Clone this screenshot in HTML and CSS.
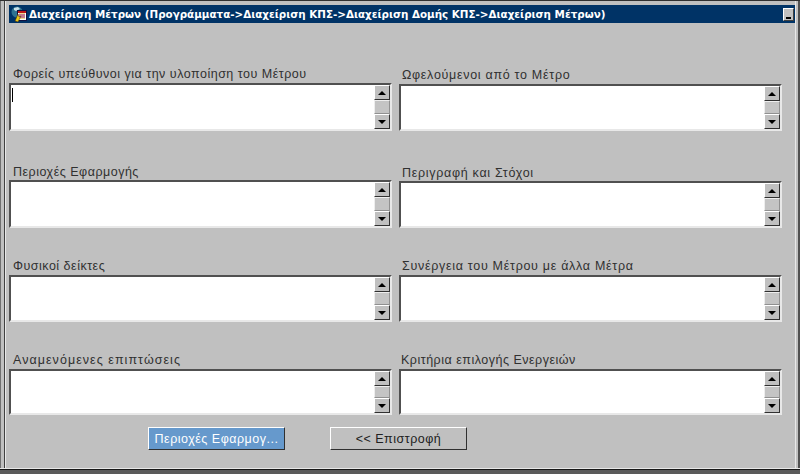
FILE: index.html
```html
<!DOCTYPE html>
<html lang="el">
<head>
  <meta charset="UTF-8">
  <title>Διαχείριση Μέτρων</title>
  <link rel="stylesheet" href="styles.css">
</head>
<body>
  <div class="window">
    <div class="titlebar">
      <svg class="app-icon" width="16" height="16" viewBox="0 0 16 16">
        <circle cx="6" cy="6" r="5.5" fill="#2f7391"/>
        <path d="M3 2 L7 1 L9 3 L5 5 L3 4 Z" fill="#c8dfe8"/>
        <rect x="6.5" y="4.5" width="9" height="10" fill="#fff" stroke="#101040"/>
        <rect x="7" y="5" width="8" height="2" fill="#c01818"/>
        <path d="M8 8 H14 M8 10 H14 M8 12 H14" stroke="#d8b820"/>
        <path d="M8 9 H14 M8 11 H14" stroke="#a01890"/>
        <path d="M4 15 L7 8 L8 11 L10 10 L7 16 Z" fill="#e8c818" stroke="#402000" stroke-width="0.5"/>
      </svg>
      <span class="title">Διαχείριση Μέτρων (Προγράμματα-&gt;Διαχείριση ΚΠΣ-&gt;Διαχείριση Δομής ΚΠΣ-&gt;Διαχείριση Μέτρων)</span>
      <div class="min-btn"><span class="min-mark"></span></div>
    </div>

    <div class="content">
      <div class="fields">
        <div class="field row-1">
          <label>Φορείς υπεύθυνοι για την υλοποίηση του Μέτρου</label>
          <div class="memo">
            <div class="memo-text"><span class="caret"></span></div>
            <div class="scrollbar">
              <div class="arrow-btn"><span class="arrow-up"></span></div>
              <div class="thumb"></div>
              <div class="arrow-btn"><span class="arrow-down"></span></div>
            </div>
          </div>
        </div>
        <div class="field row-1 col-right">
          <label class="label-loose">Ωφελούμενοι από το Μέτρο</label>
          <div class="memo">
            <div class="memo-text"></div>
            <div class="scrollbar">
              <div class="arrow-btn"><span class="arrow-up"></span></div>
              <div class="thumb"></div>
              <div class="arrow-btn"><span class="arrow-down"></span></div>
            </div>
          </div>
        </div>

        <div class="field row-2">
          <label>Περιοχές Εφαρμογής</label>
          <div class="memo">
            <div class="memo-text"></div>
            <div class="scrollbar">
              <div class="arrow-btn"><span class="arrow-up"></span></div>
              <div class="thumb"></div>
              <div class="arrow-btn"><span class="arrow-down"></span></div>
            </div>
          </div>
        </div>
        <div class="field row-2 col-right">
          <label class="label-loose">Περιγραφή και Στόχοι</label>
          <div class="memo">
            <div class="memo-text"></div>
            <div class="scrollbar">
              <div class="arrow-btn"><span class="arrow-up"></span></div>
              <div class="thumb"></div>
              <div class="arrow-btn"><span class="arrow-down"></span></div>
            </div>
          </div>
        </div>

        <div class="field row-3">
          <label>Φυσικοί δείκτες</label>
          <div class="memo">
            <div class="memo-text"></div>
            <div class="scrollbar">
              <div class="arrow-btn"><span class="arrow-up"></span></div>
              <div class="thumb"></div>
              <div class="arrow-btn"><span class="arrow-down"></span></div>
            </div>
          </div>
        </div>
        <div class="field row-3 col-right">
          <label class="label-loose">Συνέργεια του Μέτρου με άλλα Μέτρα</label>
          <div class="memo">
            <div class="memo-text"></div>
            <div class="scrollbar">
              <div class="arrow-btn"><span class="arrow-up"></span></div>
              <div class="thumb"></div>
              <div class="arrow-btn"><span class="arrow-down"></span></div>
            </div>
          </div>
        </div>

        <div class="field row-4">
          <label class="label-wide">Αναμενόμενες επιπτώσεις</label>
          <div class="memo">
            <div class="memo-text"></div>
            <div class="scrollbar">
              <div class="arrow-btn"><span class="arrow-up"></span></div>
              <div class="thumb"></div>
              <div class="arrow-btn"><span class="arrow-down"></span></div>
            </div>
          </div>
        </div>
        <div class="field row-4 col-right">
          <label>Κριτήρια επιλογής Ενεργειών</label>
          <div class="memo">
            <div class="memo-text"></div>
            <div class="scrollbar">
              <div class="arrow-btn"><span class="arrow-up"></span></div>
              <div class="thumb"></div>
              <div class="arrow-btn"><span class="arrow-down"></span></div>
            </div>
          </div>
        </div>
      </div>

      <div class="buttons">
        <button class="btn btn-active">Περιοχές Εφαρμογ...</button>
        <button class="btn">&lt;&lt; Επιστροφή</button>
      </div>
    </div>
  </div>
</body>
</html>
```

FILE: styles.css
```css
html, body {
  margin: 0;
  padding: 0;
  background: #c0c0c0;
}

/* window frame: the stacked shadows draw the old bevel lines */
.window {
  box-sizing: border-box;
  width: 800px;
  height: 474px;
  overflow: hidden;
  padding: 4px 5px 0 9px;
  background: #c0c0c0;
  border-top: 1px solid #303030;
  box-shadow:
    inset 0 -4px 0 #5a5a5a,
    inset 0 -5px 0 #181818,
    inset 0 -6px 0 #e8e8e8,
    inset 1px 0 0 #707070,
    inset 4px 0 0 #c0c0c0,
    inset 5px 0 0 #404040,
    inset 6px 0 0 #e8e8e8,
    inset -2px 0 0 #505050,
    inset -4px 0 0 #c0c0c0,
    inset -5px 0 0 #e8e8e8;
  font-family: "Liberation Sans", Arial, sans-serif;
}

.titlebar {
  display: flex;
  align-items: center;
  height: 18px;
  padding: 0 1px 0 2px;
  background: #003366;
  color: #fff;
}

.app-icon {
  flex: none;
  margin-right: 2px;
}

.title {
  flex: 1;
  font-family: "DejaVu Sans", Verdana, sans-serif;
  font-size: 10.35px;
  font-weight: bold;
  white-space: nowrap;
}

.min-btn {
  box-sizing: border-box;
  width: 11px;
  height: 13px;
  position: relative;
  background: #c0c0c0;
  border: 1px solid;
  border-color: #fff #404040 #404040 #fff;
}

.min-mark {
  position: absolute;
  left: 2px;
  bottom: 1px;
  width: 5px;
  height: 2px;
  background: #000;
}

.content {
  padding-top: 43px;
}

.fields {
  display: grid;
  grid-template-columns: 390px 383px;
}

.field {
  display: flex;
  flex-direction: column;
}

.field label {
  height: 17px;
  padding-left: 4px;
  font-size: 12.5px;
  letter-spacing: 0.5px;
  line-height: 16px;
  color: #303030;
  white-space: nowrap;
}

.field .label-loose { letter-spacing: 0.7px; }
.field .label-wide { letter-spacing: 1.05px; }

.col-right label {
  padding-left: 3px;
}

.row-1 .memo { height: 48px; }
.row-1.col-right label { height: 18px; line-height: 18px; }
.row-1.col-right .memo { height: 47px; }

.row-2 { margin-top: 32px; }
.row-2 label { padding-top: 1px; height: 16px; }
.row-2 .memo { height: 48px; }
.row-2.col-right label { padding-top: 2px; height: 16px; }
.row-2.col-right .memo { height: 47px; }

.row-3 { margin-top: 30px; }
.row-3 .memo { height: 47px; }

.row-4 { margin-top: 30px; }
.row-4 .memo { height: 46px; }
.row-4.col-right label { padding-left: 2px; }

.memo {
  box-sizing: border-box;
  display: flex;
  width: 383px;
  background: #fff;
  border: 2px solid;
  border-color: #505050 #e8e8e8 #e8e8e8 #505050;
}

.memo-text {
  flex: 1;
  padding: 3px 0 0 1px;
}

.caret {
  display: block;
  width: 1px;
  height: 14px;
  background: #000;
}

.scrollbar {
  display: flex;
  flex-direction: column;
  justify-content: space-between;
  width: 16px;
  background: #c0c0c0;
}

.arrow-btn {
  box-sizing: border-box;
  flex: none;
  height: 15px;
  display: flex;
  align-items: center;
  justify-content: center;
  background: #c0c0c0;
  border: 1px solid;
  border-color: #fff #303030 #303030 #fff;
}

.thumb {
  box-sizing: border-box;
  flex: 1;
  background: #c4c4c4;
  border: 1px solid;
  border-color: #eee #909090 #909090 #eee;
}

.arrow-up, .arrow-down {
  width: 0;
  height: 0;
  border-left: 4px solid transparent;
  border-right: 4px solid transparent;
}

.arrow-up { border-bottom: 4px solid #000; }
.arrow-down { border-top: 4px solid #000; }

.buttons {
  display: flex;
  gap: 45px;
  margin: 12px 0 0 139px;
}

.btn {
  box-sizing: border-box;
  width: 137px;
  height: 23px;
  padding: 0;
  background: #c0c0c0;
  border: 1px solid;
  border-color: #fff #303030 #303030 #fff;
  font-family: "Liberation Sans", Arial, sans-serif;
  font-size: 12.5px;
  letter-spacing: 0.5px;
  color: #202020;
}

.btn-active {
  background: #6699cc;
  color: #fff;
}
```
